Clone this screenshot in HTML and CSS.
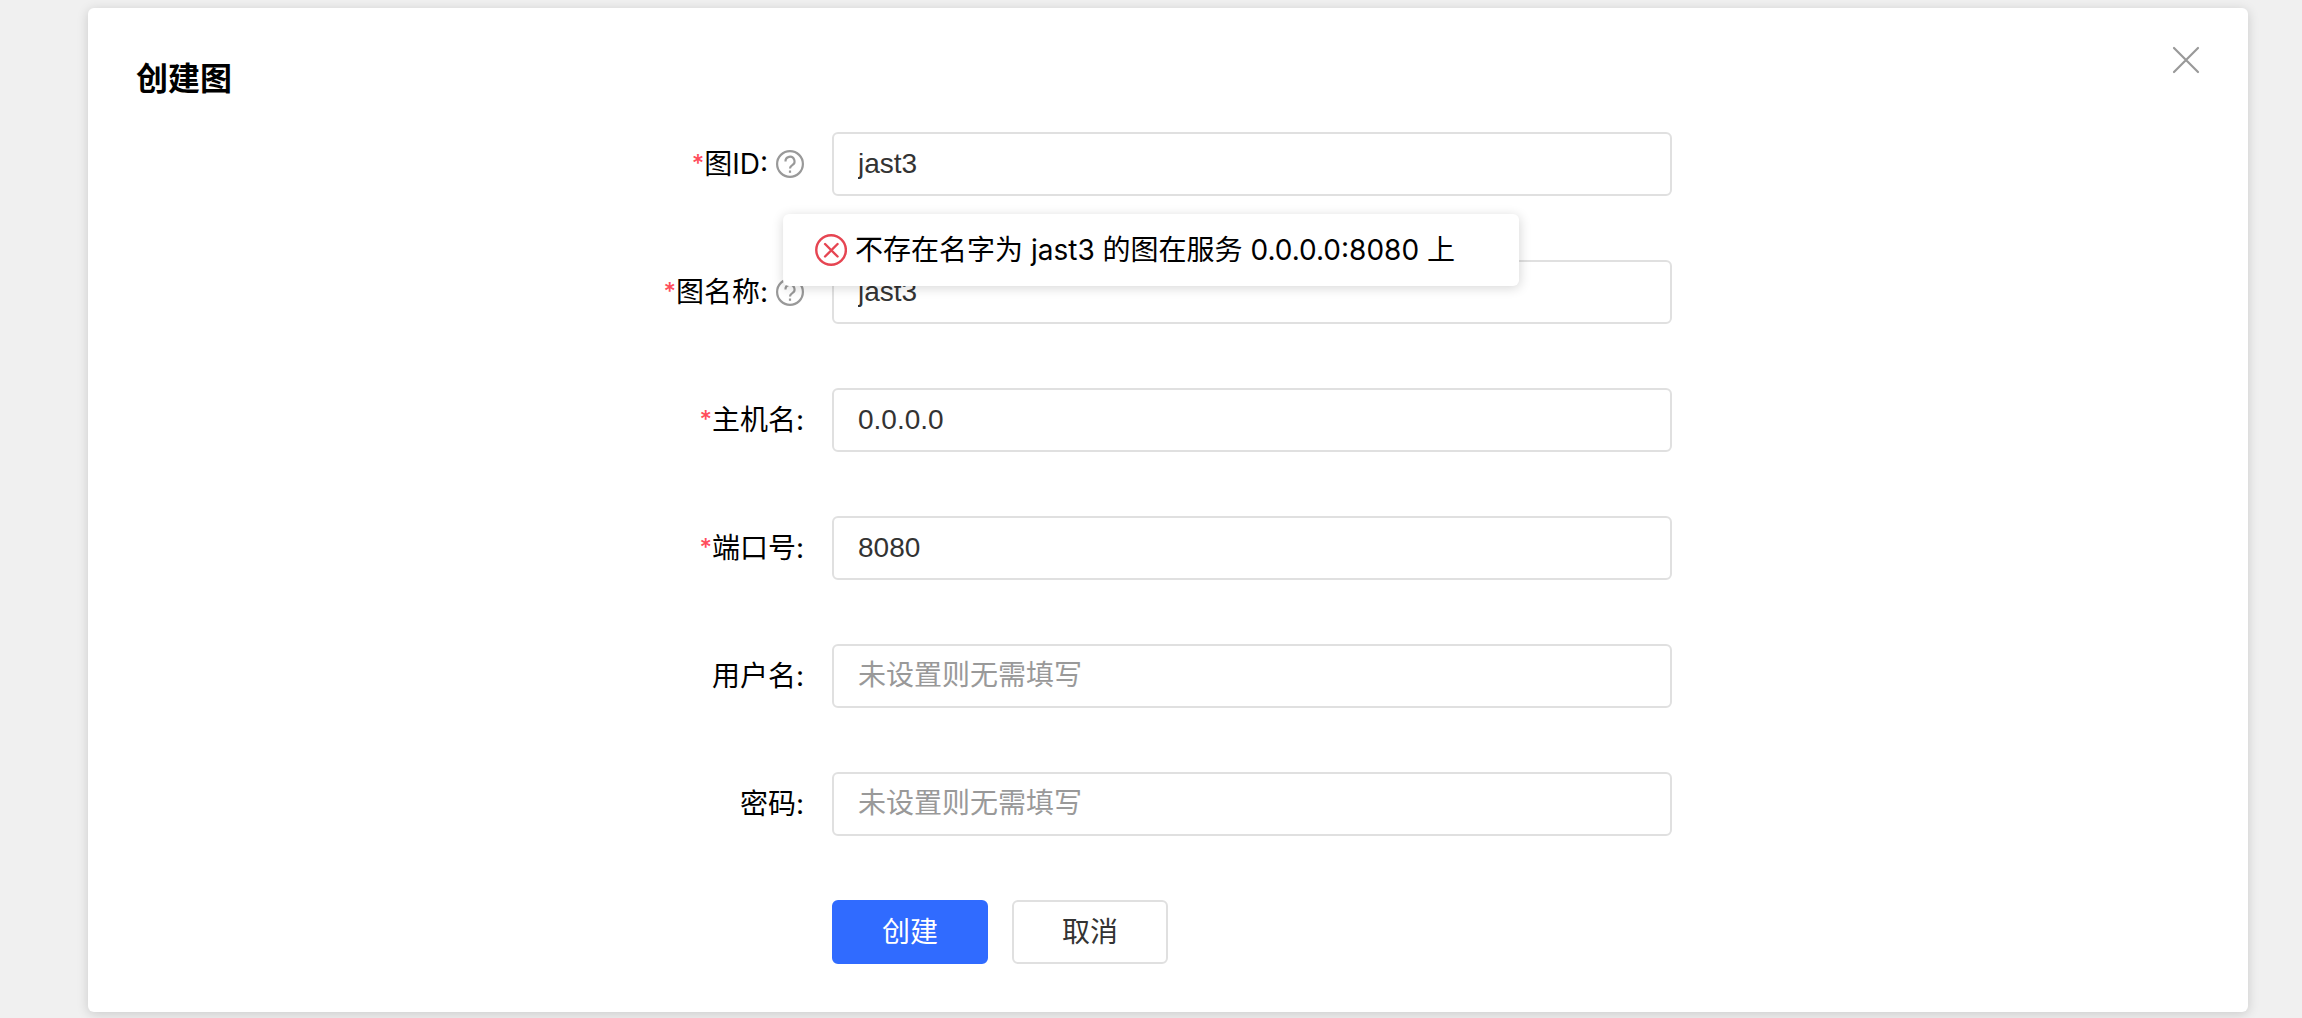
FILE: index.html
```html
<!DOCTYPE html>
<html lang="zh-CN">
<head>
<meta charset="utf-8">
<meta name="viewport" content="width=device-width, initial-scale=1">
<title>创建图</title>
<link rel="stylesheet" href="styles.css">
</head>
<body>
<main class="card">
  <header class="card-header">
    <h1 class="card-title">创建图</h1>
    <button class="close" type="button" aria-label="关闭">
      <svg viewBox="0 0 28 28" width="28" height="28" fill="none" stroke="#999" stroke-width="2.2" stroke-linecap="round"><path d="M2 2l24 24M26 2L2 26"/></svg>
    </button>
  </header>
  <form class="form">
    <div class="row">
      <label class="label" for="graph-id"><span class="required">*</span>图ID:
        <svg class="help" viewBox="0 0 28 28" width="28" height="28" fill="none" stroke="#999" stroke-width="2.2"><circle cx="14" cy="14" r="12.900"/><path d="M9.500 11.500a4.500 4.500 0 1 1 6.800 3.600c-1.600 1-2.300 1.700-2.300 3.500"/><path d="M14 20.500v2.300"/></svg>
      </label>
      <input class="input" id="graph-id" type="text" value="jast3">
    </div>
    <div class="row">
      <label class="label" for="graph-name"><span class="required">*</span>图名称:
        <svg class="help" viewBox="0 0 28 28" width="28" height="28" fill="none" stroke="#999" stroke-width="2.2"><circle cx="14" cy="14" r="12.900"/><path d="M9.500 11.500a4.500 4.500 0 1 1 6.800 3.600c-1.600 1-2.300 1.700-2.300 3.500"/><path d="M14 20.500v2.300"/></svg>
      </label>
      <input class="input" id="graph-name" type="text" value="jast3">
    </div>
    <div class="row">
      <label class="label" for="host"><span class="required">*</span>主机名:</label>
      <input class="input" id="host" type="text" value="0.0.0.0">
    </div>
    <div class="row">
      <label class="label" for="port"><span class="required">*</span>端口号:</label>
      <input class="input" id="port" type="text" value="8080">
    </div>
    <div class="row">
      <label class="label" for="username">用户名:</label>
      <input class="input" id="username" type="text" placeholder="未设置则无需填写">
    </div>
    <div class="row">
      <label class="label" for="password">密码:</label>
      <input class="input" id="password" type="password" placeholder="未设置则无需填写">
    </div>
    <div class="row">
      <div class="actions">
        <button class="button button-primary" type="submit">创建</button>
        <button class="button" type="button">取消</button>
      </div>
    </div>
  </form>
</main>
<div class="toast" role="alert">
  <svg viewBox="0 0 32 32" width="32" height="32" fill="none" stroke="#e64552" stroke-width="2.4"><circle cx="16" cy="16" r="14.800"/><path d="M10 10l12.500 12.500M22.500 10L10 22.500" stroke-linecap="round"/></svg>
  <span>不存在名字为 jast3 的图在服务 0.0.0.0:8080 上</span>
</div>
</body>
</html>
```
FILE: styles.css
```css
* {
  box-sizing: border-box;
}

body {
  margin: 0;
  padding: 8px 54px 6px 88px;
  background: #f0f0f0;
  color: #000;
  font: 28px/40px Inter, "Noto Sans CJK SC", sans-serif;
}

.card {
  padding: 38px 48px 48px;
  background: #fff;
  border-radius: 6px;
  box-shadow: 0 2px 12px rgba(0, 0, 0, 0.16);
}

.card-header {
  display: flex;
  align-items: flex-start;
  justify-content: space-between;
  margin-bottom: 20px;
}

.card-title {
  margin: 0;
  font-size: 32px;
  font-weight: 600;
  line-height: 66px;
}

.close {
  display: flex;
  padding: 0;
  border: 0;
  background: none;
  cursor: pointer;
}

.form {
  display: grid;
  gap: 64px;
}

.row {
  display: grid;
  grid-template-columns: 668fr 840fr 500fr;
  column-gap: 28px;
  align-items: center;
}

.label {
  display: flex;
  align-items: center;
  justify-content: flex-end;
}

.required {
  color: #ff4d5b;
  font-size: 24px;
  font-weight: 500;
}

.help {
  margin-left: 8px;
}

.input,
.button {
  height: 64px;
  border: 2px solid #e0e0e0;
  border-radius: 6px;
  background: #fff;
  color: #333;
  font: 28px/40px "Liberation Sans", "Noto Sans CJK SC", sans-serif;
}

.input {
  width: 100%;
  padding: 0 24px;
}

.input::placeholder {
  color: #999;
}

.actions {
  display: flex;
  grid-column: 2;
  gap: 24px;
}

.button {
  width: 156px;
  padding: 2px 0 0;
  cursor: pointer;
}

.button-primary {
  border-color: #306bff;
  background: #306bff;
  color: #fff;
}

.toast {
  position: absolute;
  top: 214px;
  left: 50%;
  display: flex;
  align-items: center;
  gap: 8px;
  padding: 16px 64px 16px 32px;
  border-radius: 6px;
  background: #fff;
  box-shadow: 0 2px 12px rgba(0, 0, 0, 0.16);
  white-space: nowrap;
  transform: translateX(-50%);
}
```
